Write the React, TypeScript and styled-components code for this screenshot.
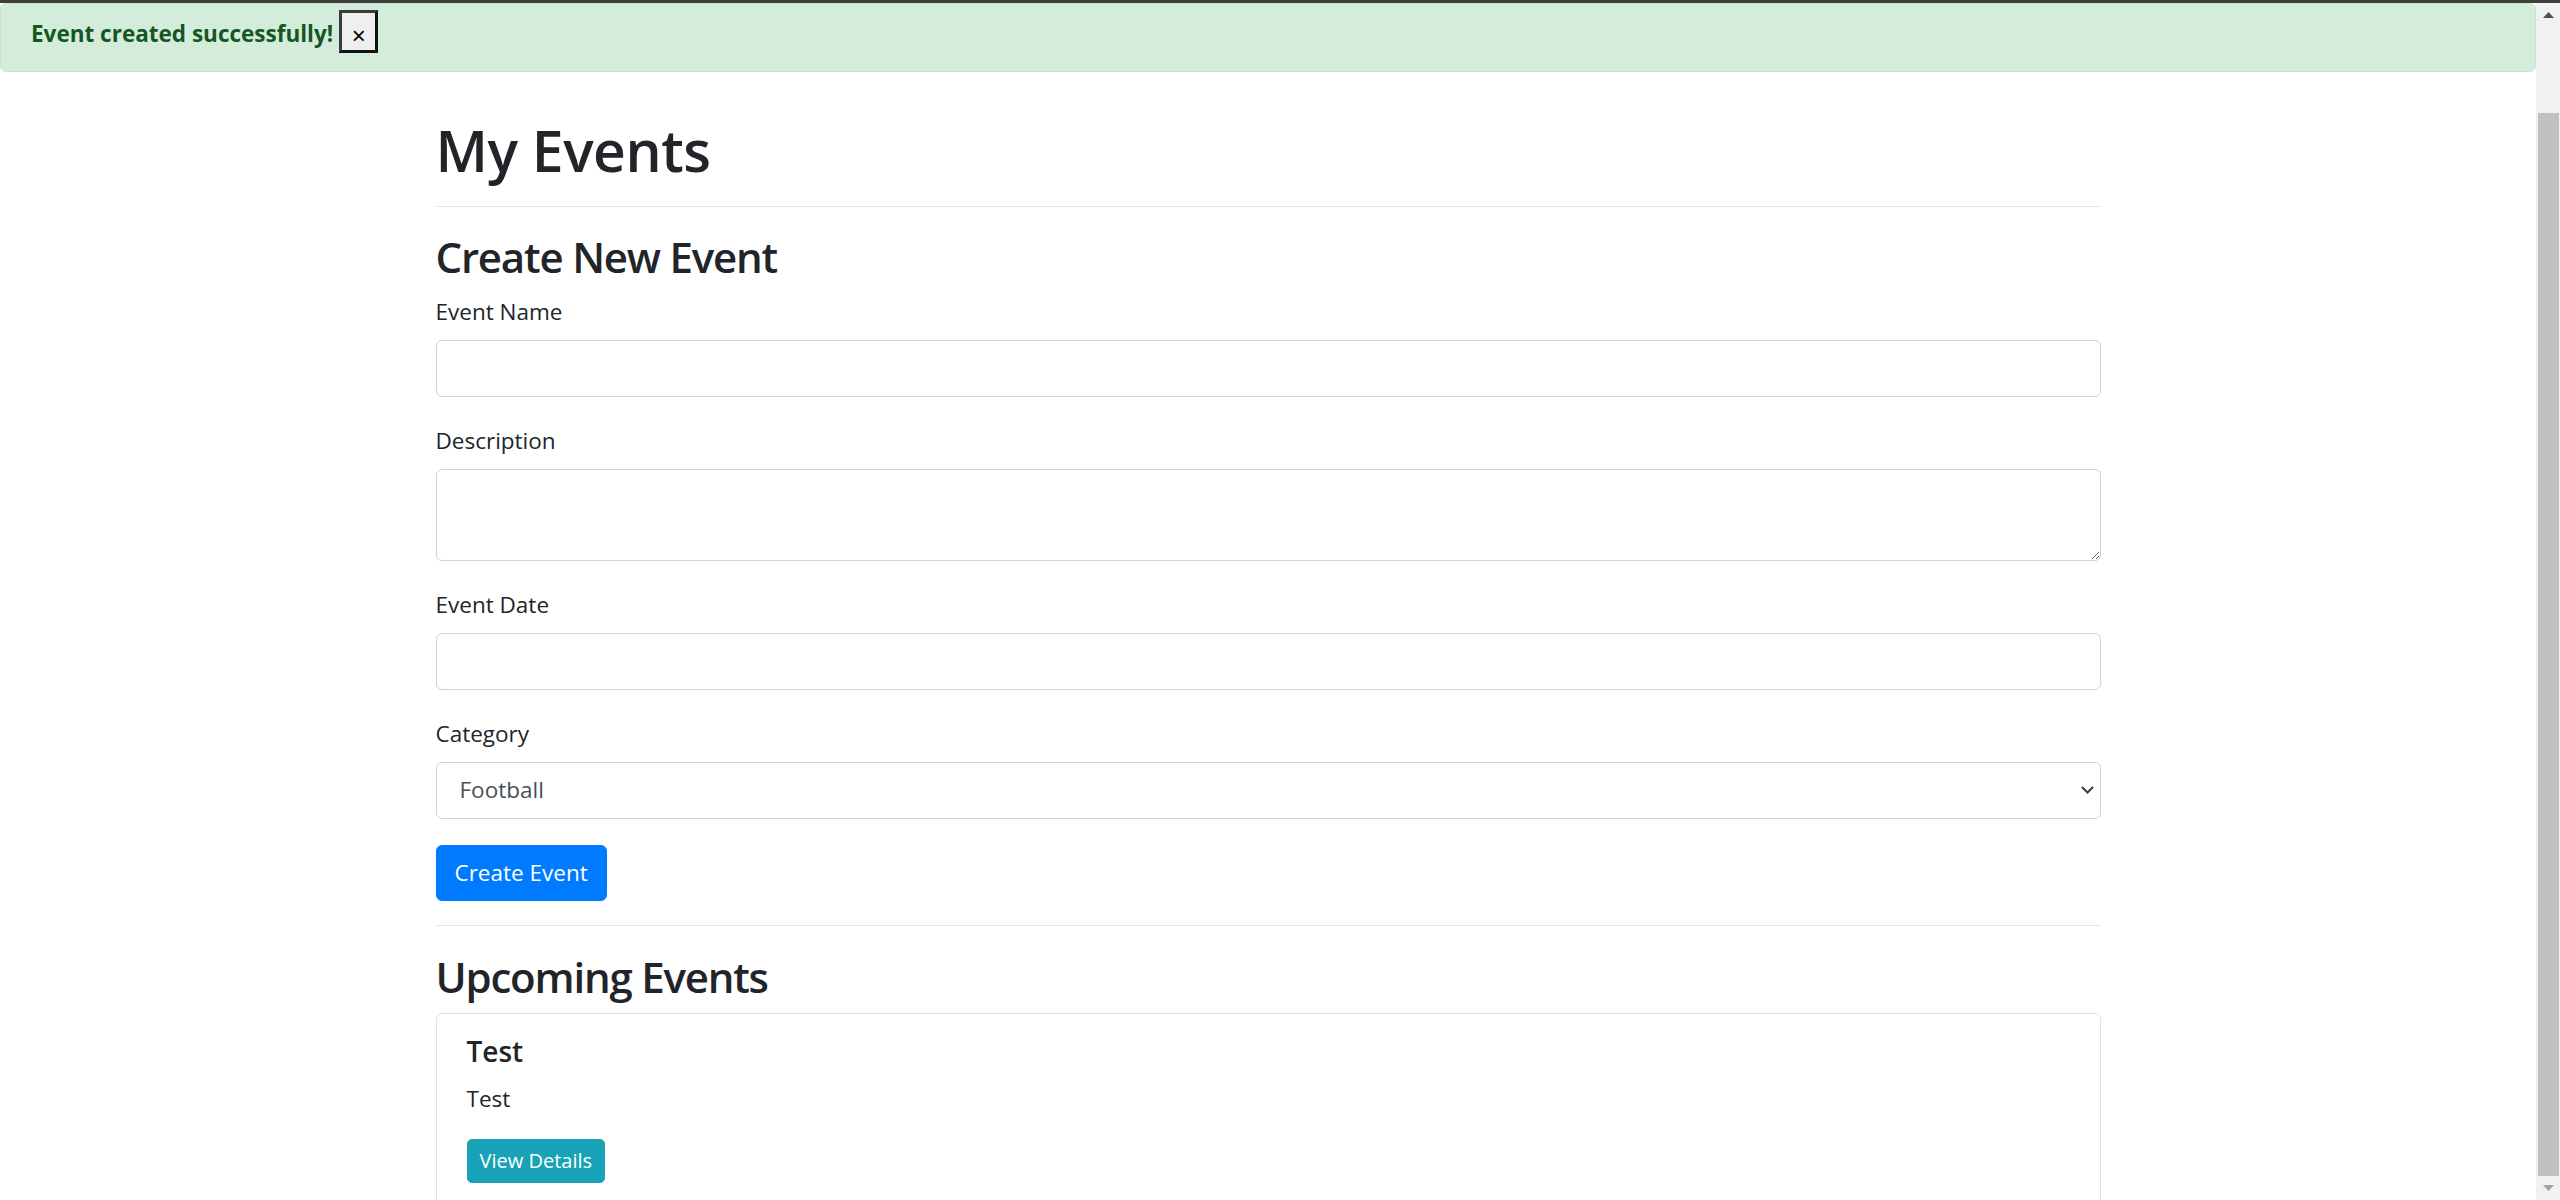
import React from "react";
import styled, { createGlobalStyle } from "styled-components";

const GlobalStyle = createGlobalStyle`
  *, *::before, *::after { box-sizing: border-box; }
  html, body { margin: 0; padding: 0; height: 100%; overflow: hidden; }
  body {
    font-family: "Open Sans", "Noto Sans", "Liberation Sans", sans-serif;
    color: #212529;
    background: #fff;
  }
  #root { height: 100%; }
`;

const Frame = styled.div`
  height: 100vh;
  display: flex;
  flex-direction: column;
`;

const WindowEdge = styled.div`
  flex: none;
  height: 3px;
  background: #3f3f3f;
`;

const Viewport = styled.div`
  flex: 1;
  min-height: 0;
  display: flex;
`;

const Page = styled.main`
  flex: 1;
  min-width: 0;
  overflow: hidden;
  background: #fff;
`;

const Alert = styled.div`
  height: 69px;
  display: flex;
  align-items: center;
  gap: 6px;
  padding: 0 30px 8px;
  background: #d4edda;
  border: 1px solid #c3e6cb;
  border-radius: 6px;
  color: #155724;
  font-size: 22.5px;
  line-height: 36px;
`;

const AlertText = styled.strong`
  font-weight: 700;
`;

const CloseButton = styled.button`
  width: 39px;
  height: 43px;
  margin-bottom: 4px;
  padding: 8px 0 0;
  background: #efefef;
  border-style: solid;
  border-width: 3px;
  border-color: #3a3a3a #111 #111 #3a3a3a;
  font-family: "Liberation Sans", Arial, sans-serif;
  font-size: 24px;
  line-height: 20px;
  color: #000;
`;

const Container = styled.div`
  width: 1665px;
  margin: 42px auto 0;
`;

const PageTitle = styled.h1`
  margin: 0 0 21px;
  padding-bottom: 20px;
  border-bottom: 1px solid rgba(0, 0, 0, 0.1);
  font-size: 57px;
  line-height: 72px;
  font-weight: 600;
  letter-spacing: -0.5px;
`;

const SectionTitle = styled.h2`
  margin: 0 0 8px;
  font-size: 42px;
  line-height: 57.6px;
  font-weight: 600;
  letter-spacing: -1.2px;
`;

const Form = styled.form`
  display: flex;
  flex-direction: column;
  align-items: flex-start;
`;

const FormGroup = styled.div`
  align-self: stretch;
  margin-bottom: 26px;
`;

const Label = styled.label`
  display: block;
  margin-bottom: 10px;
  font-size: 22.5px;
  line-height: 36px;
`;

const fieldBase = `
  display: block;
  width: 100%;
  padding: 9px 18px;
  font-family: inherit;
  font-size: 22.5px;
  line-height: 36px;
  color: #495057;
  background: #fff;
  border: 1px solid #ced4da;
  border-radius: 6px;
  outline: none;
`;

const TextInput = styled.input`
  ${fieldBase}
  height: 57px;
`;

const TextArea = styled.textarea`
  ${fieldBase}
  height: 92px;
  resize: vertical;
`;

const SelectWrap = styled.div`
  position: relative;
`;

const Select = styled.select`
  ${fieldBase}
  height: 57px;
  padding-left: 23px;
  appearance: none;
  -webkit-appearance: none;
`;

const SelectArrow = styled.svg`
  position: absolute;
  right: 7px;
  top: 50%;
  width: 13px;
  height: 8px;
  margin-top: -4px;
  pointer-events: none;
`;

const Button = styled.button<{ $variant: "primary" | "info"; $small?: boolean }>`
  display: inline-block;
  font-family: inherit;
  font-weight: 400;
  color: #fff;
  background: ${(p) => (p.$variant === "primary" ? "#007bff" : "#17a2b8")};
  border: 1px solid ${(p) => (p.$variant === "primary" ? "#007bff" : "#17a2b8")};
  border-radius: ${(p) => (p.$small ? "5px" : "6px")};
  padding: ${(p) => (p.$small ? "6px 12px" : "9px 18px")};
  font-size: ${(p) => (p.$small ? "20px" : "22.5px")};
  line-height: ${(p) => (p.$small ? "30px" : "36px")};
  cursor: pointer;
`;

const Divider = styled.hr`
  margin: 24px 0 22px;
  border: 0;
  border-top: 1px solid rgba(0, 0, 0, 0.1);
`;

const Card = styled.div`
  border: 1px solid rgba(0, 0, 0, 0.125);
  border-radius: 6px;
  padding: 19px 30px 20px;
  margin-bottom: 24px;
`;

const CardTitle = styled.h5`
  margin: 0 0 12px;
  font-size: 28px;
  line-height: 36px;
  font-weight: 600;
`;

const CardText = styled.p`
  margin: 0 0 22px;
  font-size: 22.5px;
  line-height: 36px;
`;

const Scrollbar = styled.div`
  flex: none;
  width: 24px;
  display: flex;
  flex-direction: column;
  background: #f1f1f1;
`;

const ScrollArrow = styled.div<{ $down?: boolean }>`
  flex: none;
  height: 24px;
  display: flex;
  align-items: center;
  justify-content: center;
  color: ${(p) => (p.$down ? "#a3a3a3" : "#505050")};
`;

const ScrollTrack = styled.div`
  flex: 1;
  display: flex;
  flex-direction: column;
  justify-content: flex-end;
  padding: 0 1px 0 2px;
`;

const ScrollThumb = styled.div`
  height: 1063px;
  background: #c1c1c1;
`;

const Triangle = ({ down }: { down?: boolean }) => (
  <svg width="11" height="6" viewBox="0 0 11 6">
    <path d={down ? "M0 0H11L5.5 6Z" : "M0 6H11L5.5 0Z"} fill="currentColor" />
  </svg>
);

export default function App() {
  return (
    <>
      <GlobalStyle />
      <Frame>
        <WindowEdge />
        <Viewport>
          <Page>
            <Alert>
              <AlertText>Event created successfully!</AlertText>
              <CloseButton type="button">×</CloseButton>
            </Alert>
            <Container>
              <PageTitle>My Events</PageTitle>
              <SectionTitle>Create New Event</SectionTitle>
              <Form onSubmit={(e) => e.preventDefault()}>
                <FormGroup>
                  <Label htmlFor="name">Event Name</Label>
                  <TextInput id="name" type="text" />
                </FormGroup>
                <FormGroup>
                  <Label htmlFor="desc">Description</Label>
                  <TextArea id="desc" rows={2} />
                </FormGroup>
                <FormGroup>
                  <Label htmlFor="date">Event Date</Label>
                  <TextInput id="date" type="text" />
                </FormGroup>
                <FormGroup>
                  <Label htmlFor="cat">Category</Label>
                  <SelectWrap>
                    <Select id="cat" defaultValue="Football">
                      <option>Football</option>
                      <option>Basketball</option>
                      <option>Tennis</option>
                    </Select>
                    <SelectArrow viewBox="0 0 13 8">
                      <path d="M1 1L6.5 6.5L12 1" fill="none" stroke="#3c3c3c" strokeWidth="2" />
                    </SelectArrow>
                  </SelectWrap>
                </FormGroup>
                <Button type="submit" $variant="primary">Create Event</Button>
              </Form>
              <Divider />
              <SectionTitle>Upcoming Events</SectionTitle>
              <Card>
                <CardTitle>Test</CardTitle>
                <CardText>Test</CardText>
                <Button type="button" $variant="info" $small>View Details</Button>
              </Card>
            </Container>
          </Page>
          <Scrollbar>
            <ScrollArrow>
              <Triangle />
            </ScrollArrow>
            <ScrollTrack>
              <ScrollThumb />
            </ScrollTrack>
            <ScrollArrow $down>
              <Triangle down />
            </ScrollArrow>
          </Scrollbar>
        </Viewport>
      </Frame>
    </>
  );
}
